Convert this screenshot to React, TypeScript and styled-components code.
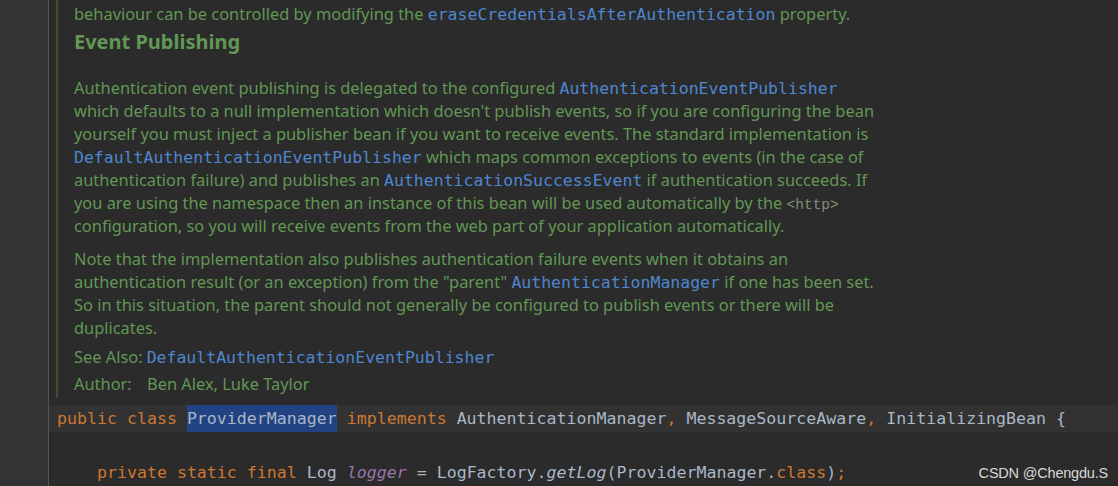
import React from "react";
import styled, { createGlobalStyle } from "styled-components";

const Global = createGlobalStyle`
  html, body { margin: 0; padding: 0; background: #2b2b2b; }
  body { width: 1118px; height: 486px; overflow: hidden; }
`;

const Frame = styled.div`
  display: flex;
  width: 1118px;
  height: 486px;
  overflow: hidden;
  position: relative;
  background: #2b2b2b;
`;

const Gutter = styled.div`
  width: 48px;
  flex: none;
  background: #313335;
  border-right: 1px solid #555555;
`;

const Editor = styled.div`
  flex: 1;
  display: flex;
  flex-direction: column;
  min-width: 0;
`;

const DocBlock = styled.div`
  margin-left: 7px;
  border-left: 2px solid #3b5234;
  padding: 2px 0 3px 16px;
  font-family: "Noto Sans", sans-serif;
  font-size: 16.4px;
  color: #629755;
  display: flex;
  flex-direction: column;
`;

const Line = styled.div`
  height: 23px;
  line-height: 23px;
  white-space: nowrap;
`;

const Heading = styled.div`
  margin-top: 3px;
  height: 28px;
  line-height: 28px;
  font-size: 20px;
  font-weight: 700;
  color: #629755;
  white-space: nowrap;
`;

const Para = styled.div<{ $gap: number }>`
  margin-top: ${(p) => p.$gap}px;
  display: flex;
  flex-direction: column;
`;

const Ref = styled.span`
  font-family: "DejaVu Sans Mono", monospace;
  font-size: 16.5px;
  color: #4f86d0;
`;

const Tag = styled.span`
  font-family: "Liberation Mono", monospace;
  font-size: 14.5px;
  color: #80907a;
`;

const Label = styled.span<{ $w?: number }>`
  display: inline-block;
  width: ${(p) => (p.$w ? `${p.$w}px` : "auto")};
  margin-right: 4px;
`;

const Code = styled.div`
  margin-top: 7px;
  font-family: "DejaVu Sans Mono", monospace;
  font-size: 16.6px;
  color: #a9b7c6;
  display: flex;
  flex-direction: column;
`;

const CodeLine = styled.div<{ $current?: boolean }>`
  height: 27px;
  line-height: 27px;
  padding-left: 8px;
  white-space: pre;
  background: ${(p) => (p.$current ? "#323232" : "transparent")};
`;

const Kw = styled.span`
  color: #cc7832;
`;

const Sel = styled.span`
  background: #214283;
  display: inline-block;
  height: 27px;
`;

const Field = styled.span`
  color: #9876aa;
  font-style: italic;
`;

const Ital = styled.span`
  font-style: italic;
`;

const Watermark = styled.div`
  position: absolute;
  right: 10px;
  bottom: 5px;
  font-family: "Liberation Sans", Arial, sans-serif;
  font-size: 14.5px;
  color: #d8d8d8;
  letter-spacing: -0.2px;
`;

export default function App() {
  return (
    <>
      <Global />
      <Frame>
        <Gutter />
        <Editor>
          <DocBlock>
            <Line>
              behaviour can be controlled by modifying the{" "}
              <Ref>eraseCredentialsAfterAuthentication</Ref> property.
            </Line>
            <Heading>Event Publishing</Heading>
            <Para $gap={20}>
              <Line>
                Authentication event publishing is delegated to the configured{" "}
                <Ref>AuthenticationEventPublisher</Ref>
              </Line>
              <Line>
                which defaults to a null implementation which doesn't publish events, so if you are configuring the bean
              </Line>
              <Line>
                yourself you must inject a publisher bean if you want to receive events. The standard implementation is
              </Line>
              <Line>
                <Ref>DefaultAuthenticationEventPublisher</Ref> which maps common exceptions to events (in the case of
              </Line>
              <Line>
                authentication failure) and publishes an <Ref>AuthenticationSuccessEvent</Ref> if authentication succeeds. If
              </Line>
              <Line>
                you are using the namespace then an instance of this bean will be used automatically by the{" "}
                <Tag>&lt;http&gt;</Tag>
              </Line>
              <Line>
                configuration, so you will receive events from the web part of your application automatically.
              </Line>
            </Para>
            <Para $gap={10}>
              <Line>
                Note that the implementation also publishes authentication failure events when it obtains an
              </Line>
              <Line>
                authentication result (or an exception) from the "parent" <Ref>AuthenticationManager</Ref> if one has been set.
              </Line>
              <Line>
                So in this situation, the parent should not generally be configured to publish events or there will be
              </Line>
              <Line>duplicates.</Line>
            </Para>
            <Para $gap={6}>
              <Line>
                <Label>See Also:</Label>
                <Ref>DefaultAuthenticationEventPublisher</Ref>
              </Line>
            </Para>
            <Para $gap={4}>
              <Line>
                <Label $w={69}>Author:</Label>Ben Alex, Luke Taylor
              </Line>
            </Para>
          </DocBlock>
          <Code>
            <CodeLine $current>
              <Kw>public class </Kw>
              <Sel>ProviderManager</Sel>
              <Kw> implements </Kw>AuthenticationManager<Kw>, </Kw>MessageSourceAware<Kw>, </Kw>InitializingBean {"{"}
            </CodeLine>
            <CodeLine> </CodeLine>
            <CodeLine>
              {"    "}
              <Kw>private static final </Kw>Log <Field>logger</Field> = LogFactory.<Ital>getLog</Ital>(ProviderManager.
              <Kw>class</Kw>)<Kw>;</Kw>
            </CodeLine>
          </Code>
        </Editor>
        <Watermark>CSDN @Chengdu.S</Watermark>
      </Frame>
    </>
  );
}
